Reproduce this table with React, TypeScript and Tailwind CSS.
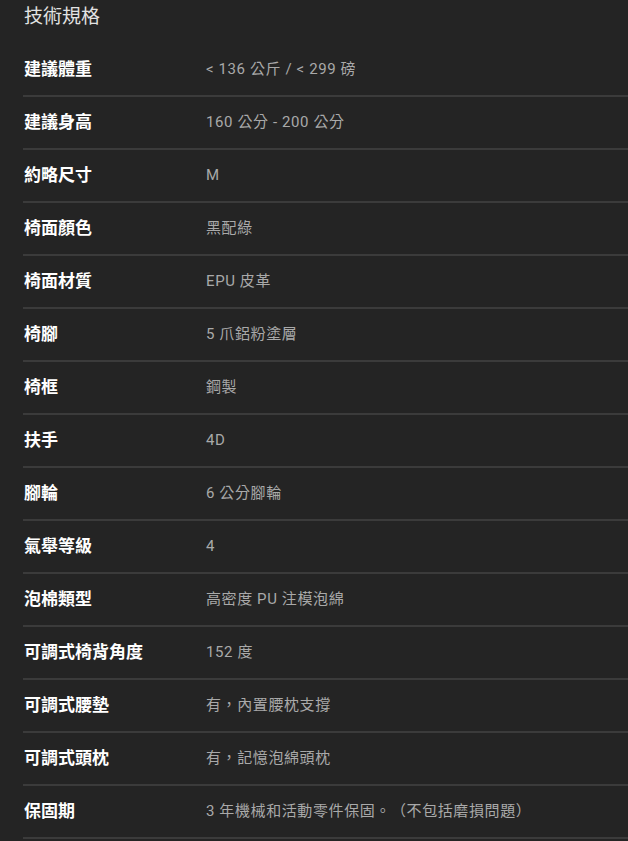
import React from "react";

const rows: [string, string][] = [
  ["建議體重", "< 136 公斤 / < 299 磅"],
  ["建議身高", "160 公分 - 200 公分"],
  ["約略尺寸", "M"],
  ["椅面顏色", "黑配綠"],
  ["椅面材質", "EPU 皮革"],
  ["椅腳", "5 爪鋁粉塗層"],
  ["椅框", "鋼製"],
  ["扶手", "4D"],
  ["腳輪", "6 公分腳輪"],
  ["氣舉等級", "4"],
  ["泡棉類型", "高密度 PU 注模泡綿"],
  ["可調式椅背角度", "152 度"],
  ["可調式腰墊", "有，內置腰枕支撐"],
  ["可調式頭枕", "有，記憶泡綿頭枕"],
  ["保固期", "3 年機械和活動零件保固。（不包括磨損問題）"],
];

export default function App() {
  return (
    <div
      lang="zh-TW"
      className="min-h-[841px] w-full bg-[#242424] pl-[23px] [text-spacing-trim:space-all]"
      style={{ fontFamily: "Roboto, 'Noto Sans CJK TC', sans-serif" }}
    >
      <div className="flex h-[44px] items-start pt-[3px] pl-[1px] text-[19px] text-[#e2e2e2]">
        技術規格
      </div>
      {rows.map(([k, v]) => (
        <div
          key={k}
          className="flex h-[53px] items-center border-b-2 border-[#3b3b3b]"
        >
          <div className="w-[183px] shrink-0 pl-[1px] text-[17px] font-bold text-white">
            {k}
          </div>
          <div className="text-[15px] tracking-[0.6px] text-[#a9a9a9]">{v}</div>
        </div>
      ))}
    </div>
  );
}
